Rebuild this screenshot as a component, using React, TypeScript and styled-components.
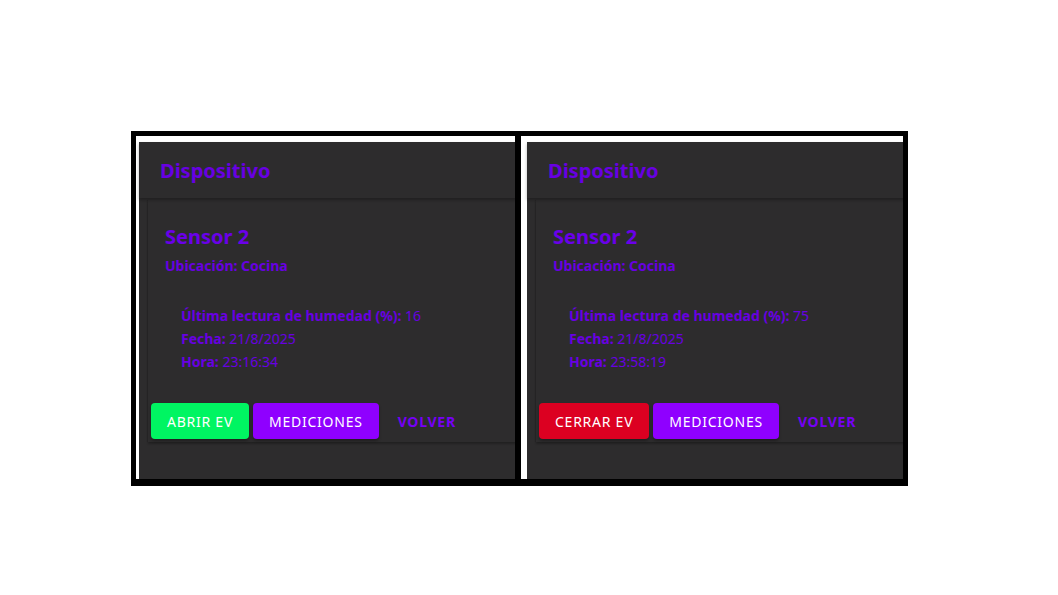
import React from "react";
import styled, { createGlobalStyle } from "styled-components";

const GlobalStyle = createGlobalStyle`
  html, body { margin: 0; padding: 0; background: #ffffff; }
  body { font-family: "Noto Sans", "Open Sans", sans-serif; }
`;

const Page = styled.div`
  padding: 131px 0 0 131px;
`;

const Frame = styled.div`
  display: inline-flex;
  gap: 6px;
  background: #000;
  border: 5px solid #000;
  border-bottom-width: 7px;
  height: 343px;
`;

const Pane = styled.div<{ $inset: number; $width: number }>`
  width: ${(p) => p.$width - p.$inset}px;
  background: #ffffff;
  overflow: hidden;
  padding: 6px 0 0 ${(p) => p.$inset}px;
`;

const Card = styled.div`
  width: 440px;
  height: 420px;
  background: #2d2c2d;
`;

const Header = styled.div`
  height: 56px;
  display: flex;
  align-items: center;
  padding-left: 21px;
  box-shadow: 0 2px 3px rgba(0, 0, 0, 0.28);
  position: relative;
  z-index: 1;
  color: #6800e2;
  font-size: 20px;
  font-weight: 700;
`;

const Inner = styled.div`
  margin: 2px 0 0 9px;
  padding-top: 23px;
  background: #2d2c2d;
  box-shadow: 0 2px 2px rgba(0, 0, 0, 0.25), -1px 0 1px rgba(0, 0, 0, 0.1);
`;

const Title = styled.div`
  padding-left: 17px;
  color: #6a00ea;
  font-size: 20px;
  font-weight: 700;
  line-height: 28px;
`;

const Location = styled.div`
  padding-left: 17px;
  margin-top: 5px;
  color: #6800e2;
  font-size: 14px;
  font-weight: 700;
  line-height: 20px;
`;

const Readings = styled.div`
  padding-left: 33px;
  margin-top: 28px;
  display: flex;
  flex-direction: column;
`;

const Reading = styled.div`
  color: #6800e2;
  font-size: 14px;
  line-height: 23px;
`;

const Label = styled.span`
  font-weight: 700;
`;

const Actions = styled.div`
  display: flex;
  align-items: center;
  gap: 4px;
  padding: 30px 0 3px 3px;
`;

const Button = styled.button<{ $bg?: string; $color?: string }>`
  height: 36px;
  padding: 0 ${(p) => (p.$bg ? 16 : 15)}px;
  border: none;
  border-radius: 4px;
  background: ${(p) => p.$bg ?? "transparent"};
  color: ${(p) => p.$color ?? "#ffffff"};
  font-family: "Noto Sans", "Open Sans", sans-serif;
  font-size: 14px;
  font-weight: ${(p) => (p.$bg ? 400 : 700)};
  letter-spacing: 0.75px;
  text-transform: uppercase;
  box-shadow: ${(p) => (p.$bg ? "0 2px 3px rgba(0,0,0,0.3)" : "none")};
  cursor: pointer;
`;

type DeviceProps = {
  inset: number;
  width: number;
  value: string;
  time: string;
  open: boolean;
};

function Device({ inset, width, value, time, open }: DeviceProps) {
  return (
    <Pane $inset={inset} $width={width}>
      <Card>
        <Header>Dispositivo</Header>
        <Inner>
          <Title>Sensor 2</Title>
          <Location>Ubicación: Cocina</Location>
          <Readings>
            <Reading>
              <Label>Última lectura de humedad (%):</Label> {value}
            </Reading>
            <Reading>
              <Label>Fecha:</Label> 21/8/2025
            </Reading>
            <Reading>
              <Label>Hora:</Label> {time}
            </Reading>
          </Readings>
          <Actions>
            {open ? (
              <Button $bg="#00f562">Abrir EV</Button>
            ) : (
              <Button $bg="#dc0021">Cerrar EV</Button>
            )}
            <Button $bg="#8f00ff">Mediciones</Button>
            <Button $color="#7600f5">Volver</Button>
          </Actions>
        </Inner>
      </Card>
    </Pane>
  );
}

export default function App() {
  return (
    <>
      <GlobalStyle />
      <Page>
        <Frame>
          <Device inset={3} width={379} value="16" time="23:16:34" open />
          <Device inset={6} width={382} value="75" time="23:58:19" open={false} />
        </Frame>
      </Page>
    </>
  );
}
